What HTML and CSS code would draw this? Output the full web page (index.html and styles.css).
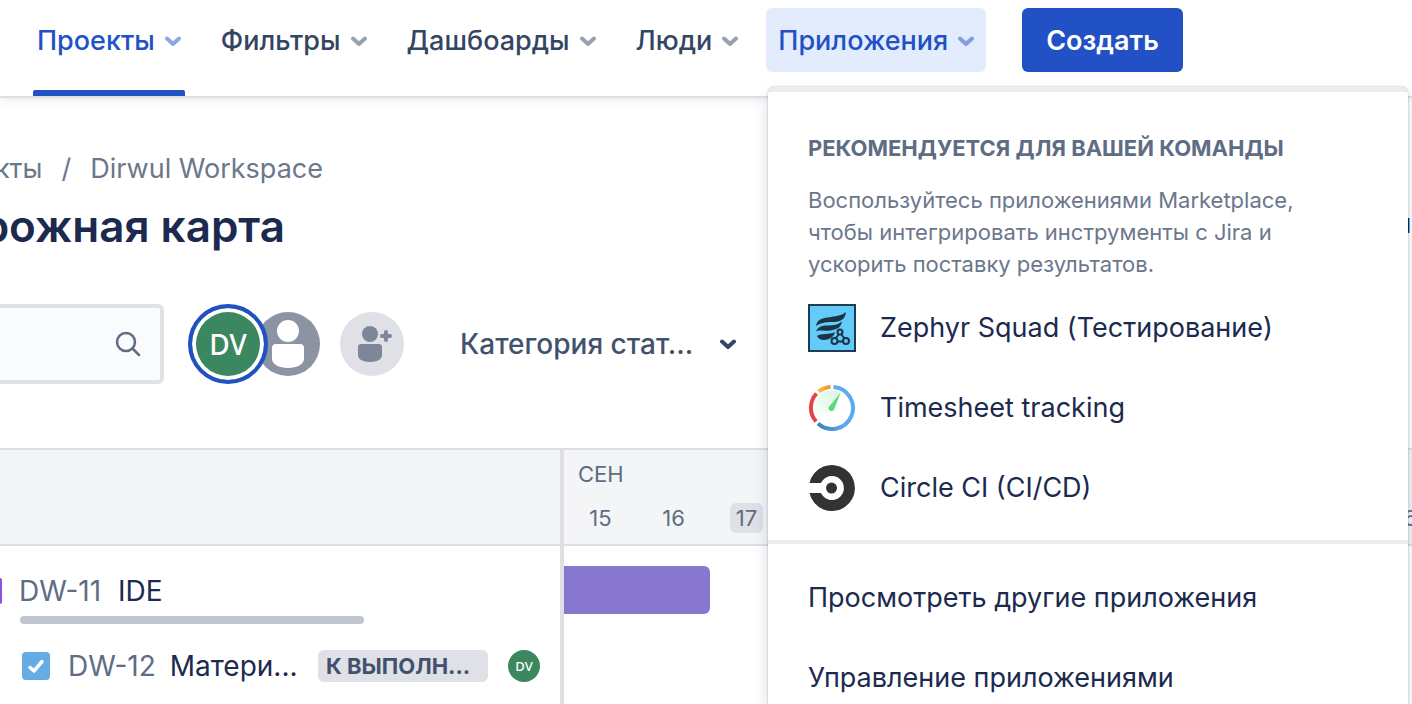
FILE: index.html
```html
<!DOCTYPE html>
<html lang="ru">
<head>
<meta charset="utf-8">
<meta name="viewport" content="width=device-width, initial-scale=1">
<title>Дорожная карта</title>
<link rel="stylesheet" href="styles.css">
</head>
<body>
<header class="topbar">
  <nav class="nav" aria-label="Основная навигация">
    <button class="nav-item nav-item-current" type="button">Проекты<svg class="chevron" viewBox="0 0 16 16" aria-hidden="true"><path d="M2 5.5 8 11l6-5.5"/></svg></button>
    <button class="nav-item" type="button">Фильтры<svg class="chevron" viewBox="0 0 16 16" aria-hidden="true"><path d="M2 5.5 8 11l6-5.5"/></svg></button>
    <button class="nav-item" type="button">Дашбоарды<svg class="chevron" viewBox="0 0 16 16" aria-hidden="true"><path d="M2 5.5 8 11l6-5.5"/></svg></button>
    <button class="nav-item" type="button">Люди<svg class="chevron" viewBox="0 0 16 16" aria-hidden="true"><path d="M2 5.5 8 11l6-5.5"/></svg></button>
    <button class="nav-item nav-item-open" type="button" aria-expanded="true">Приложения<svg class="chevron" viewBox="0 0 16 16" aria-hidden="true"><path d="M2 5.5 8 11l6-5.5"/></svg></button>
  </nav>
  <button class="create" type="button">Создать</button>
</header>

<main class="page">
  <div class="crumbs">
    <a href="#">Проекты</a><span>/</span><a href="#">Dirwul Workspace</a>
  </div>
  <div class="heading">
    <h1 class="title">Дорожная карта</h1>
    <button class="share" type="button">П</button>
  </div>
  <div class="toolbar">
    <label class="search">
      <input class="search-input" type="text" aria-label="Поиск">
      <svg class="search-icon" viewBox="0 0 28 28" aria-hidden="true"><circle cx="12" cy="12" r="9"/><path d="m18.500 18.500 6.500 6.500"/></svg>
    </label>
    <div class="people">
      <span class="avatar avatar-selected">DV</span>
      <svg class="avatar-empty" viewBox="0 0 64 64" aria-hidden="true"><circle cx="32" cy="32" r="32" fill="#8c93a3"/><circle cx="32" cy="19" r="11" fill="#fff"/><path d="M16 36q0-4 4-4h24q4 0 4 4v11c0 5-7 9-16 9s-16-4-16-9z" fill="#fff"/></svg>
      <button class="add-person" type="button" aria-label="Добавить людей"><svg viewBox="0 0 64 64" aria-hidden="true"><g fill="#7e879a"><circle cx="30" cy="22" r="8"/><path d="M18 35q0-3 3-3h18q3 0 3 3v8c0 4-4 7-12 7s-12-3-12-7z"/></g><path d="M42 24h8M46 20v8" stroke="#7e879a" stroke-width="4" stroke-linecap="round"/></svg></button>
    </div>
    <button class="filter" type="button">Категория стат...<svg class="chevron" viewBox="0 0 16 16" aria-hidden="true"><path d="M2 5.500 8 11l6-5.500"/></svg></button>
  </div>

  <section class="roadmap">
    <div class="issues">
      <div class="issues-head"></div>
      <div class="issue issue-epic">
        <span class="epic-icon"></span>
        <a class="key" href="#">DW-11</a><span class="name">IDE</span>
      </div>
      <div class="progress"></div>
      <div class="issue issue-child">
        <svg class="task-icon" viewBox="0 0 28 28" aria-hidden="true"><rect width="28" height="28" rx="4" fill="#65ace5"/><path d="m8 15.500 4 3.500 8-9.500" fill="none" stroke="#fff" stroke-width="3.500" stroke-linecap="round" stroke-linejoin="round"/></svg>
        <a class="key" href="#">DW-12</a><span class="name">Матери...</span>
        <span class="status">К ВЫПОЛН...</span>
        <span class="avatar avatar-small">DV</span>
      </div>
    </div>
    <div class="timeline">
      <div class="timeline-head">
        <div class="month">СЕН</div>
        <div class="days">
          <span class="day">15</span><span class="day">16</span><span class="day"><span class="today">17</span></span><span class="day">18</span><span class="day">19</span><span class="day">20</span><span class="day">21</span><span class="day">22</span><span class="day">23</span><span class="day">24</span><span class="day">25</span><span class="day">26</span>
        </div>
      </div>
      <div class="bar"></div>
    </div>
  </section>
</main>

<div class="menu">
  <section class="recommended">
    <h2 class="menu-title">РЕКОМЕНДУЕТСЯ ДЛЯ ВАШЕЙ КОМАНДЫ</h2>
    <p class="menu-text">Воспользуйтесь приложениями Marketplace, чтобы интегрировать инструменты с Jira и ускорить поставку результатов.</p>
    <a class="menu-item" href="#">
      <svg class="app-icon" viewBox="0 0 48 48" aria-hidden="true"><rect x="1" y="1" width="46" height="46" fill="#62cbf7" stroke="#1f3c50" stroke-width="2"/><g fill="#1c3347"><path d="M8 22c1-7 7-8 15-9 7-1 11-2 15-5-1 8-6 10-14 10-7 0-12 1-16 4z"/><path d="M8 27.500c2-5 6-6 12-6 6 0 10-1 14-4-1 6-5 8-12 9-6 1-11-1-14 1z"/><path d="M9 32c4-3 12-1 18-4-1 5-6 8-11 8-4 0-6-2-7-4z"/></g><g fill="#62cbf7" stroke="#1c3347" stroke-width="2"><path d="m31 30-4 5M33 30l4 5M29 37.500h6"/><circle cx="32" cy="28" r="2.500"/><circle cx="26.500" cy="37" r="3"/><circle cx="38" cy="37" r="3"/></g></svg>
      Zephyr Squad (Тестирование)
    </a>
    <a class="menu-item" href="#">
      <svg class="app-icon" viewBox="0 0 48 48" aria-hidden="true"><defs><linearGradient id="face" x1="1" y1="0" x2="0" y2="1"><stop offset="0" stop-color="#b9efcb"/><stop offset="1" stop-color="#fff"/></linearGradient><linearGradient id="ring" x1="0" y1="1" x2="1" y2="0"><stop offset="0" stop-color="#377fb6"/><stop offset=".4" stop-color="#5dabef"/></linearGradient><linearGradient id="amber"><stop offset="0" stop-color="#f4bf42"/><stop offset="1" stop-color="#ef8d32"/></linearGradient></defs><path d="M24 24 9 35A18 18 0 0 1 33 9z" fill="url(#face)" opacity=".6"/><g fill="none" stroke-width="4"><path d="M25.500 3A21 21 0 1 1 10 39.600" stroke="url(#ring)"/><path d="M8 37.500A21 21 0 0 1 8.500 9.500" stroke="#e64148"/><path d="M10.500 7.500A21 21 0 0 1 22.500 3" stroke="url(#amber)"/></g><path d="m32.500 9-10.500 12.500a3 3 0 1 0 4.500 3z" fill="#58da78"/></svg>
      Timesheet tracking
    </a>
    <a class="menu-item" href="#">
      <svg class="app-icon" viewBox="0 0 48 48" aria-hidden="true"><path d="M1.500 19A23 23 0 1 1 1.500 29H13a12 12 0 1 0 0-10z" fill="#333432"/><circle cx="23.500" cy="24" r="5.500" fill="#333432"/></svg>
      Circle CI (CI/CD)
    </a>
  </section>
  <section class="manage">
    <a class="menu-item" href="#">Просмотреть другие приложения</a>
    <a class="menu-item" href="#">Управление приложениями</a>
  </section>
</div>
</body>
</html>
```
FILE: styles.css
```css
* { box-sizing: border-box; }
body {
  margin: 0;
  min-height: 100vh;
  position: relative;
  overflow: hidden;
  background: #fff;
  color: #1b2a4e;
  font: 400 28px/32px Inter, "Noto Sans", sans-serif;
}
a { color: inherit; text-decoration: none; }
button { border: 0; padding: 0; background: none; color: inherit; font: inherit; cursor: pointer; }
.chevron { width: 16px; height: 16px; flex: none; fill: none; stroke: currentColor; stroke-width: 4px; stroke-linecap: round; stroke-linejoin: round; }

.topbar { display: flex; align-items: flex-start; gap: 36px; height: 98px; padding: 8px 0 0 25px; border-bottom: 2px solid #dddfe4; box-shadow: 0 2px 8px #091e4218; }
.nav { display: flex; gap: 16px; }
.nav-item { position: relative; display: flex; align-items: center; gap: 10px; height: 64px; padding: 2px 12px 0; border-radius: 6px; color: #344563; font-size: 27px; font-weight: 500; white-space: nowrap; }
.nav-item .chevron { opacity: .5; }
.nav-item-current, .nav-item-open { color: #2151c5; }
.nav-item-current::after { content: ""; position: absolute; left: 8px; right: 8px; bottom: -24px; height: 6px; border-radius: 2px 2px 0 0; background: #2151c5; }
.nav-item-open { background: #e3ecfd; }
.create { height: 64px; padding: 2px 24px 0; border-radius: 6px; background: #2151c5; color: #fff; font-size: 27px; font-weight: 600; }

.page { padding-top: 55px; }
.crumbs { display: flex; justify-content: flex-end; gap: 19px; width: 323px; color: #6b778c; font-size: 27px; white-space: nowrap; }
.heading { display: flex; justify-content: space-between; align-items: center; height: 56px; margin-top: 13px; }
.title { display: flex; justify-content: flex-end; width: 285px; margin: 0; font-size: 44px; line-height: 56px; font-weight: 600; white-space: nowrap; }
.share { padding-right: 1px; font-size: 20px; }
.toolbar { display: flex; align-items: center; height: 80px; margin-top: 50px; }
.search { display: flex; align-items: center; width: 164px; height: 80px; padding-right: 18px; border: 4px solid #dfe1e6; border-left: 0; border-radius: 0 6px 6px 0; background: #fafbfc; }
.search-input { flex: 1; min-width: 0; border: 0; background: none; font: inherit; outline: 0; }
.search-icon { width: 28px; height: 28px; fill: none; stroke: #5e6c84; stroke-width: 2.500; stroke-linecap: round; }
.people { display: flex; align-items: center; margin-left: 24px; }
.avatar { display: grid; place-items: center; border-radius: 50%; background: #3b875f; color: #fff; font-family: "Noto Sans", sans-serif; font-weight: 500; }
.avatar-selected { z-index: 1; width: 80px; height: 80px; border: 4px solid #2151c5; box-shadow: inset 0 0 0 4px #fff; font-size: 28px; }
.avatar-empty { width: 64px; height: 64px; margin-left: -12px; }
.add-person { width: 64px; height: 64px; margin-left: 20px; border-radius: 50%; background: #dfe1e6; }
.add-person svg { display: block; }
.filter { display: flex; align-items: center; gap: 27px; margin-left: 56px; color: #42526e; font-size: 28px; font-weight: 500; white-space: nowrap; }
.filter .chevron { color: #344563; }

.roadmap { display: grid; grid-template-columns: 564px 1fr; min-height: 256px; margin-top: 64px; }
.issues { border-right: 4px solid #dfdfe4; }
.issues-head, .timeline-head { height: 98px; border: solid #dddfe4; border-width: 2px 0; background: #f4f5f7; }
.issue { display: flex; align-items: center; white-space: nowrap; font-size: 28px; }
.issue-epic { height: 64px; padding-top: 26px; gap: 17px; }
.epic-icon { width: 2px; height: 26px; border-radius: 0 3px 3px 0; background: #904ee2; }
.key { color: #5e6c84; }
.progress { width: 344px; height: 8px; margin: 6px 0 0 20px; border-radius: 4px; background: #c1c5cf; }
.issue-child { height: 32px; margin: 26px 20px 0 22px; }
.task-icon { width: 28px; height: 28px; margin-right: 18px; }
.issue-child .name { margin-left: 14px; }
.status { width: 170px; height: 32px; margin-left: auto; padding-left: 8px; border-radius: 6px; background: #dfe1e6; color: #42526e; font-size: 22px; font-weight: 700; }
.avatar-small { width: 32px; height: 32px; margin-left: 20px; font-size: 13px; }
.timeline { min-width: 0; overflow: hidden; }
.timeline-head { padding-top: 8px; color: #5e6c84; font-size: 22px; }
.month { padding-left: 14px; }
.days { display: flex; margin-top: 12px; }
.day { flex: 0 0 73px; text-align: center; }
.today { display: inline-block; padding: 0 6px; border-radius: 6px; background: #dfe1e6; line-height: 30px; }
.bar { width: 146px; height: 48px; margin-top: 20px; border-radius: 0 6px 6px 0; background: #8777d1; }

.menu { position: absolute; z-index: 2; top: 87px; right: 4px; bottom: 0; width: 640px; border-top: 5px solid #ebecf0; border-radius: 6px 6px 0 0; background: #fff; box-shadow: 0 0 2px #091e4250, 0 8px 16px #091e4226; }
.recommended { padding: 40px 40px 12px; border-bottom: 4px solid #ebecf0; }
.menu-title { margin: 0; color: #5e6c84; font-size: 22px; line-height: 32px; font-weight: 700; }
.menu-text { max-width: 500px; margin: 20px 0 8px; color: #6b778c; font-size: 22px; line-height: 32px; }
.menu-item { display: flex; align-items: center; gap: 24px; height: 80px; font-size: 27px; white-space: nowrap; }
.app-icon { width: 48px; height: 48px; flex: none; }
.manage { padding: 14px 40px 0; }
```
